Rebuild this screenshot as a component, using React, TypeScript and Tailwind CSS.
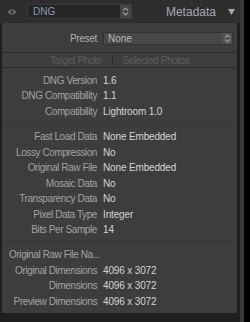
import React from 'react';

const FONT = { fontFamily: '"Liberation Sans", Arial, sans-serif' };

const GROUPS: [string, string][][] = [
  [
    ['DNG Version', '1.6'],
    ['DNG Compatibility', '1.1'],
    ['Compatibility', 'Lightroom 1.0'],
  ],
  [
    ['Fast Load Data', 'None Embedded'],
    ['Lossy Compression', 'No'],
    ['Original Raw File', 'None Embedded'],
    ['Mosaic Data', 'No'],
    ['Transparency Data', 'No'],
    ['Pixel Data Type', 'Integer'],
    ['Bits Per Sample', '14'],
  ],
];

const DIMENSIONS: [string, string][] = [
  ['Original Dimensions', '4096 x 3072'],
  ['Dimensions', '4096 x 3072'],
  ['Preview Dimensions', '4096 x 3072'],
];

// tiny up/down stepper arrows used by the popup menus
const Stepper = () => (
  <svg width="7" height="9" viewBox="0 0 7 9" className="text-[#9a9a9a]">
    <path d="M1 3.5 L3.5 1 L6 3.5" fill="none" stroke="currentColor" strokeWidth="1.2" />
    <path d="M1 5.5 L3.5 8 L6 5.5" fill="none" stroke="currentColor" strokeWidth="1.2" />
  </svg>
);

const Row: React.FC<{ label: string; value: string }> = ({ label, value }) => (
  <div className="flex h-[15.5px] items-center">
    <span className="w-[95px] shrink-0 text-right text-[10px] leading-none tracking-[-0.4px] text-[#a3a3a3] whitespace-nowrap">
      {label}
    </span>
    <span className="ml-[6px] text-[10px] leading-none tracking-[-0.15px] text-[#d4d4d4] whitespace-nowrap">
      {value}
    </span>
  </div>
);

export default function App() {
  return (
    <div className="flex w-[250px] h-[322px] bg-black overflow-hidden" style={FONT}>
      <div className="flex w-[240px] flex-col">
        {/* Panel header */}
        <div className="flex h-[23px] shrink-0 items-center bg-[#2e2e2e]">
          <svg width="10" height="8" viewBox="0 0 10 8" className="ml-[7px] text-[#6e6e6e]">
            <path d="M0.5 4 Q5 -1.5 9.5 4 Q5 9.5 0.5 4 Z" fill="currentColor" />
            <circle cx="5" cy="4" r="1.6" fill="#2e2e2e" />
          </svg>
          <div className="ml-[10px] flex h-[15px] w-[105px] items-stretch border border-[#3a3a3a] bg-[#262626]">
            <span className="flex flex-1 items-center pl-[5px] text-[10px] text-[#8d96ae]">DNG</span>
            <span className="flex w-[11px] items-center justify-center bg-[#454545]">
              <Stepper />
            </span>
          </div>
          <span className="ml-auto text-[12px] leading-none text-[#a3a8b6]">Metadata</span>
          <svg width="7" height="6" viewBox="0 0 7 6" className="ml-[12px] mr-[5px] text-[#a3a8b6]">
            <path d="M0 0 H7 L3.5 6 Z" fill="currentColor" />
          </svg>
        </div>

        {/* Panel body */}
        <div className="flex flex-1 flex-col bg-[#1f1f1f] pl-[2px] pr-[3px] pb-[9px]">
          <div className="flex flex-1 flex-col bg-[#3d3d3d]">
            {/* Preset */}
            <div className="mt-[8px] flex h-[14px] items-center">
              <span className="w-[95px] text-right text-[10px] tracking-[-0.3px] text-[#b0b0b0]">Preset</span>
              <div className="ml-[6px] flex h-[13px] w-[130px] items-stretch border border-[#333] bg-[#484848]">
                <span className="flex flex-1 items-center pl-[4px] text-[10px] text-[#b8b8b8]">None</span>
                <span className="flex w-[10px] items-center justify-center bg-[#525252]">
                  <Stepper />
                </span>
              </div>
            </div>

            {/* Target / selected photos */}
            <div className="mt-[7px] h-px bg-[#2a2a2a]" />
            <div className="flex h-[14px] items-center justify-center text-[10px] tracking-[-0.4px] text-[#5e5e5e]">
              <span>Target Photo</span>
              <span className="mx-[10px] h-[10px] w-px bg-[#2c2c2c]" />
              <span>Selected Photos</span>
            </div>
            <div className="h-px bg-[#2a2a2a]" />

            <div className="pt-[5px]">
              {GROUPS[0].map(([l, v]) => (
                <Row key={l} label={l} value={v} />
              ))}
            </div>
            <div className="my-[4.5px] h-px bg-[#363636]" />
            <div>
              {GROUPS[1].map(([l, v]) => (
                <Row key={l} label={l} value={v} />
              ))}
            </div>
            <div className="mt-[3px] mb-[5.25px] h-px bg-[#363636]" />
            <div>
              <div className="flex h-[15.5px] items-center pl-[7px] text-[10px] leading-none tracking-[-0.4px] text-[#a3a3a3] whitespace-nowrap">
                Original Raw File Na...
              </div>
              {DIMENSIONS.map(([l, v]) => (
                <Row key={l} label={l} value={v} />
              ))}
            </div>
          </div>
        </div>
      </div>
      <div className="w-[4px] bg-[#383838]" />
    </div>
  );
}
